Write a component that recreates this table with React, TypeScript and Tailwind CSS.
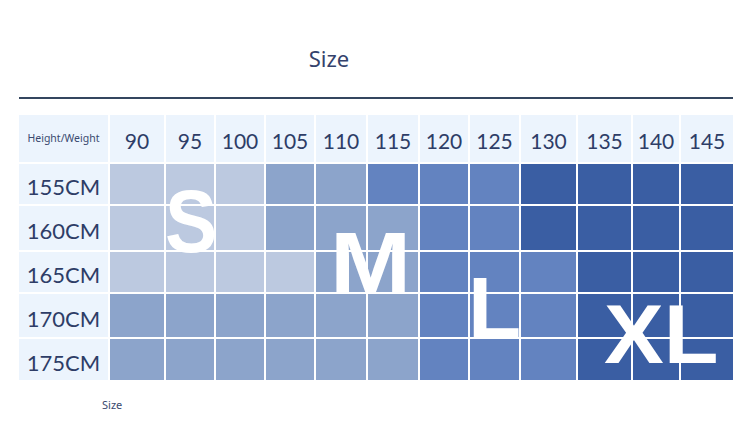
const weights = ["90", "95", "100", "105", "110", "115", "120", "125", "130", "135", "140", "145"];

// L = light, M = mid, B = blue, D = dark
const rows: { label: string; h: string; cells: string }[] = [
  { label: "155CM", h: "h-[40px]", cells: "LLLMMBBBDDDD" },
  { label: "160CM", h: "h-[44px]", cells: "LLLMMMBBDDDD" },
  { label: "165CM", h: "h-[40px]", cells: "LLLLMMBBBDDD" },
  { label: "170CM", h: "h-[43px]", cells: "MMMMMMBBBDDD" },
  { label: "175CM", h: "h-[41px]", cells: "MMMMMMBBBDDD" },
];

const tone: Record<string, string> = {
  L: "bg-[#bcc9e0]",
  M: "bg-[#8ca4cb]",
  B: "bg-[#6383c0]",
  D: "bg-[#3a5ea3]",
};

export default function App() {
  return (
    <div className="w-[750px] h-[426px] bg-white overflow-hidden font-['Noto_Sans',sans-serif]">
      {/* Title */}
      <div className="w-[658px] pt-[43px] text-center text-[22px] leading-[30px] text-[#34426c]">Size</div>
      <div className="ml-[19px] mr-[17px] mt-[24px] h-[2px] bg-[#34465f]" />

      {/* Chart */}
      <div className="relative ml-[19px] mt-[16px] w-[714px]">
        <div className="grid gap-[2px] grid-cols-[89px_54px_48px_48px_48px_50px_50px_48px_49px_55px_53px_46px_52px]">
          <div className="h-[47px] bg-[#ecf4fd] flex items-center justify-center text-[10.5px] text-[#3a4a70]">
            Height/Weight
          </div>
          {weights.map((w) => (
            <div
              key={w}
              className="h-[47px] bg-[#ecf4fd] flex items-center justify-center pt-[4px] font-['Lato',sans-serif] text-[21px] text-[#2e3d67]"
            >
              {w}
            </div>
          ))}
          {rows.map((r) => (
            <>
              <div
                key={r.label}
                className={`${r.h} bg-[#ecf4fd] flex items-center justify-center pt-[5px] font-['Lato',sans-serif] text-[22px] text-[#2e3d67]`}
              >
                {r.label}
              </div>
              {r.cells.split("").map((c, i) => (
                <div key={r.label + i} className={`${r.h} ${tone[c]}`} />
              ))}
            </>
          ))}
        </div>

        {/* Size letters */}
        <div className="absolute left-[146px] top-[62px] origin-left scale-x-[0.88] text-[89px] leading-none font-bold text-white font-['Liberation_Sans',sans-serif]">
          S
        </div>
        <div className="absolute left-[311px] top-[104px] origin-left scale-x-[1.12] text-[87px] leading-none font-bold text-white font-['Liberation_Sans',sans-serif]">
          M
        </div>
        <div className="absolute left-[449px] top-[149px] text-[87px] leading-none font-bold text-white font-['Liberation_Sans',sans-serif]">
          L
        </div>
        <div className="absolute left-[585px] top-[178px] origin-left scale-x-[1.08] text-[83px] leading-none font-bold text-white font-['Liberation_Sans',sans-serif]">
          XL
        </div>
      </div>

      <div className="ml-[102px] mt-[18px] text-[11px] leading-[14px] text-[#3a4a70]">Size</div>
    </div>
  );
}
